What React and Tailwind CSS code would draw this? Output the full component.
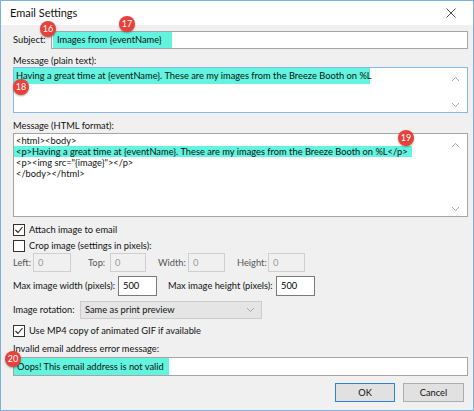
function Chevron({ up, className = '' }) {
  return (
    <svg width="9" height="6" viewBox="0 0 9 6" className={className}>
      <path
        d={up ? 'M1 5 L4.5 1.5 L8 5' : 'M1 1 L4.5 4.5 L8 1'}
        fill="none"
        stroke="#a6a6a6"
        strokeWidth="1"
      />
    </svg>
  );
}

function Badge({ n, className }) {
  return (
    <div
      className={`absolute w-[16px] h-[16px] rounded-full bg-[#e8403a] text-white text-[9px] leading-[16px] text-center shadow-[0_1px_2px_rgba(0,0,0,0.35)] ${className}`}
    >
      {n}
    </div>
  );
}

function Check({ checked, label }) {
  return (
    <div className="flex items-center gap-[4px]">
      <div className="w-[12px] h-[12px] border border-[#333] bg-white flex items-center justify-center">
        {checked && (
          <svg width="10" height="10" viewBox="0 0 10 10">
            <path d="M1.5 5 L4 7.5 L8.5 2" fill="none" stroke="#222" strokeWidth="1.1" />
          </svg>
        )}
      </div>
      <span>{label}</span>
    </div>
  );
}

function SmallBox({ w, value, disabled }) {
  return (
    <div
      className={`h-full border pl-[4px] flex items-center ${
        disabled ? 'border-[#cfcfcf] bg-[#f0f0f0] text-[#9a9a9a]' : 'border-[#7a7a7a] bg-white text-black'
      } ${w}`}
    >
      {value}
    </div>
  );
}

export default function App() {
  return (
    <div
      className="relative w-[474px] h-[411px] overflow-hidden whitespace-nowrap border border-[#7eb0de] bg-[#f0f0f0] text-[9.3px] text-[#111]"
      style={{ fontFamily: 'Lato, "Noto Sans", sans-serif' }}
    >
      <div className="h-[24px] bg-white flex items-center justify-between pl-[9px] pr-[17px]">
        <span className="text-[11px]">Email Settings</span>
        <svg width="10" height="10" viewBox="0 0 10 10">
          <path d="M0.5 0.5 L9.5 9.5 M9.5 0.5 L0.5 9.5" stroke="#333" strokeWidth="0.9" />
        </svg>
      </div>

      <div className="flex flex-col pl-[12px] pr-[5px]">
        <div className="mt-[6px] h-[18px] flex items-center">
          <span className="w-[38px]">Subject:</span>
          <div className="flex-1 h-full border border-[#a5a5a5] bg-white">
            <div className="ml-[1px] w-[119px] h-full bg-[#62f4de] pl-[4px] flex items-center">
              Images from {'{eventName}'}
            </div>
          </div>
        </div>

        <div className="h-[18px] pt-[5px] leading-[13px]">Message (plain text):</div>
        <div className="relative h-[46px] border border-[#86b7e6] bg-white">
          <div className="w-[356px] h-[16px] bg-[#62f4de] pl-[2px] flex items-center">
            Having a great time at {'{eventName}'}. These are my images from the Breeze Booth on %L
          </div>
          <Chevron up className="absolute right-[7px] top-[8px]" />
          <Chevron className="absolute right-[7px] bottom-[4px]" />
        </div>

        <div className="h-[20px] pt-[6px] leading-[13px]">Message (HTML format):</div>
        <div className="relative h-[84px] border border-[#a5a5a5] bg-white pt-[1px] leading-[11px]">
          <div className="pl-[2px]">&lt;html&gt;&lt;body&gt;</div>
          <div className="w-[398px] h-[11px] bg-[#62f4de] pl-[2px] flex items-center">
            &lt;p&gt;Having a great time at {'{eventName}'}. These are my images from the Breeze Booth on %L&lt;/p&gt;
          </div>
          <div className="pl-[2px]">&lt;p&gt;&lt;img src="{'{image}'}"&gt;&lt;/p&gt;</div>
          <div className="pl-[2px]">&lt;/body&gt;&lt;/html&gt;</div>
          <Chevron up className="absolute right-[7px] top-[8px]" />
          <Chevron className="absolute right-[7px] bottom-[4px]" />
        </div>

        <div className="mt-[4px] h-[17px] flex items-center">
          <Check checked label="Attach image to email" />
        </div>
        <div className="h-[15px] flex items-center">
          <Check label="Crop image (settings in pixels):" />
        </div>
        <div className="h-[19px] flex items-center">
          <span className="w-[20px] text-[#555]">Left:</span>
          <SmallBox w="w-[38px]" value="0" disabled />
          <span className="ml-[17px] w-[22px] text-[#555]">Top:</span>
          <SmallBox w="w-[36px]" value="0" disabled />
          <span className="ml-[12px] w-[30px] text-[#555]">Width:</span>
          <SmallBox w="w-[37px]" value="0" disabled />
          <span className="ml-[12px] w-[31px] text-[#555]">Height:</span>
          <SmallBox w="w-[37px]" value="0" disabled />
        </div>

        <div className="mt-[4px] h-[20px] flex items-center">
          <span className="w-[105px]">Max image width (pixels):</span>
          <SmallBox w="w-[39px]" value="500" />
          <span className="ml-[11px] w-[108px]">Max image height (pixels):</span>
          <SmallBox w="w-[39px]" value="500" />
        </div>

        <div className="mt-[5px] h-[18px] flex items-center">
          <span className="w-[67px]">Image rotation:</span>
          <div className="w-[182px] h-full border border-[#cccccc] bg-[#e5e5e5] pl-[4px] pr-[6px] flex items-center justify-between">
            <span>Same as print preview</span>
            <Chevron />
          </div>
        </div>

        <div className="mt-[4px] h-[16px] flex items-center">
          <Check checked label="Use MP4 copy of animated GIF if available" />
        </div>
        <div className="mt-[2px] h-[16px] flex items-center">Invalid email address error message:</div>
        <div className="h-[19px] border border-[#a5a5a5] bg-white">
          <div className="w-[155px] h-full bg-[#62f4de] pl-[3px] flex items-center">
            Oops! This email address is not valid
          </div>
        </div>

        <div className="mt-[7px] h-[19px] flex justify-end gap-[8px] pr-[4px]">
          <div className="w-[60px] h-full border border-[#2f83d4] bg-[#e1e1e1] flex items-center justify-center">
            OK
          </div>
          <div className="w-[61px] h-full border border-[#adadad] bg-[#e1e1e1] flex items-center justify-center">
            Cancel
          </div>
        </div>
      </div>

      <Badge n="16" className="left-[39px] top-[20px]" />
      <Badge n="17" className="left-[118px] top-[15px]" />
      <Badge n="18" className="left-[12px] top-[78px]" />
      <Badge n="19" className="left-[397px] top-[129px]" />
      <Badge n="20" className="left-[4px] top-[350px]" />
    </div>
  );
}
